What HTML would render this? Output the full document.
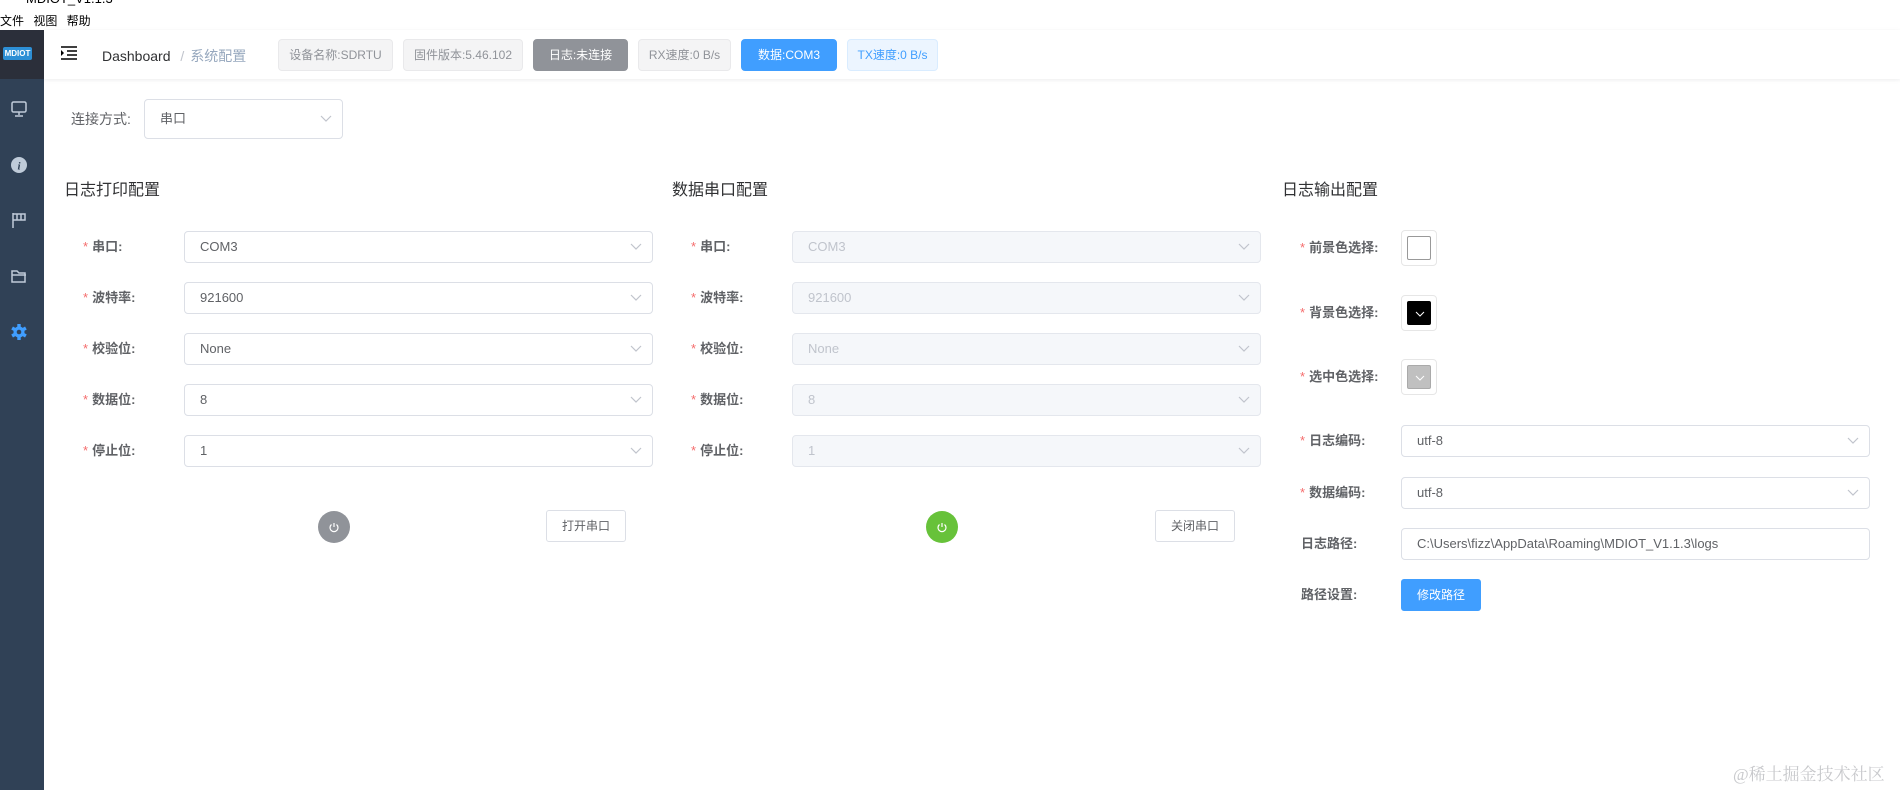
<!DOCTYPE html>
<html><head><meta charset="utf-8">
<style>
*{margin:0;padding:0;box-sizing:border-box}
body{width:1900px;height:790px;overflow:hidden;background:#fff;font-family:"Liberation Sans","Noto Sans CJK SC",sans-serif;color:#606266;position:relative}
.a{position:absolute}
.sb{left:0;top:30px;width:44px;height:760px;background:#304156}
.sbt{left:0;top:30px;width:44px;height:49px;background:#2b2f3a}
.logo{left:3px;top:47px;width:29px;height:13px;background:#2d8fd5;color:#fff;font-size:8px;font-weight:bold;line-height:13px;text-align:center;border-radius:2px}
.hdr{left:44px;top:30px;width:1856px;height:49px;background:#fff;box-shadow:0 1px 4px rgba(0,21,41,.08)}
.tag{top:39px;height:32px;line-height:30px;font-size:12px;border:1px solid #e9e9eb;background:#f4f4f5;color:#909399;border-radius:4px;text-align:center}
.lbl{font-size:13px;font-weight:bold;color:#606266;line-height:32px;text-align:left;white-space:nowrap}
.lbl i{color:#f56c6c;font-style:normal;font-weight:normal;margin-right:4px}
.sel{height:32px;border:1px solid #dcdfe6;border-radius:4px;background:#fff;font-size:13px;line-height:30px;padding-left:15px;color:#606266}
.sel.d{background:#f5f7fa;border-color:#e4e7ed;color:#c0c4cc}
.sel svg{position:absolute;right:10px;top:11px}
.ttl{font-size:16px;color:#303133}
.btn{height:32px;border:1px solid #dcdfe6;border-radius:3px;background:#fff;font-size:12px;line-height:30px;text-align:center;color:#606266}
.pw{width:32px;height:32px;border-radius:50%}
.cp{width:36px;height:36px;border:1px solid #e6e6e6;border-radius:4px;padding:5px}
.cp div{width:100%;height:100%;border:1px solid #999;border-radius:2px;position:relative}
</style></head><body>
<div class="a" style="left:26px;top:-9px;font-size:13px;color:#000">MDIOT_V1.1.3</div>
<div class="a" style="left:0;top:12px;font-size:12px;color:#000;word-spacing:6px">文件 视图 帮助</div>
<div class="a sb"></div><div class="a sbt"></div>
<div class="a logo">MDIOT</div>
<svg class="a" style="left:10px;top:100px" width="18" height="18" viewBox="0 0 18 18" fill="none" stroke="#bfcbd9" stroke-width="1.5"><rect x="2" y="2" width="14" height="10" rx="1.5"/><path d="M9 12v3M5 16h8"/></svg>
<svg class="a" style="left:10px;top:156px" width="18" height="18" viewBox="0 0 18 18"><circle cx="9" cy="9" r="8" fill="#bfcbd9"/><text x="9" y="13.5" font-size="11" font-style="italic" font-weight="bold" text-anchor="middle" fill="#304156" font-family="Liberation Serif">i</text></svg>
<svg class="a" style="left:10px;top:211px" width="18" height="18" viewBox="0 0 18 18" fill="none" stroke="#bfcbd9" stroke-width="1.5"><path d="M3 2v15M3 3h12v6H3M7 3v6M11 3v6"/></svg>
<svg class="a" style="left:10px;top:267px" width="18" height="18" viewBox="0 0 18 18" fill="none" stroke="#bfcbd9" stroke-width="1.5"><path d="M2 4h5l2 2h6v9H2zM2 8h14"/></svg>
<svg class="a" style="left:9px;top:322px" width="20" height="20" viewBox="0 0 20 20"><g stroke="#409eff" stroke-width="3.4" stroke-linecap="butt"><path d="M10 2v16M3.1 6l13.8 8M3.1 14l13.8-8"/></g><circle cx="10" cy="10" r="5.5" fill="#409eff"/><circle cx="10" cy="10" r="2.3" fill="#304156"/></svg>
<div class="a hdr"></div>
<svg class="a" style="left:61px;top:46px" width="16" height="14" viewBox="0 0 16 14" stroke="#000" stroke-width="1.6"><path d="M0 1h16M6 5h10M6 9h10M0 13h16"/><path d="M0 4l3 3-3 3z" fill="#000" stroke="none"/></svg>
<div class="a" style="left:102px;top:46px;font-size:14px;color:#303133">Dashboard <span style="color:#c0c4cc;margin:0 6px">/</span><span style="color:#97a8be">系统配置</span></div>
<div class="a tag" style="left:278px;width:115px">设备名称:SDRTU</div>
<div class="a tag" style="left:403px;width:120px">固件版本:5.46.102</div>
<div class="a tag" style="left:533px;width:95px;background:#909399;border-color:#909399;color:#fff">日志:未连接</div>
<div class="a tag" style="left:638px;width:93px">RX速度:0 B/s</div>
<div class="a tag" style="left:741px;width:96px;background:#409eff;border-color:#409eff;color:#fff">数据:COM3</div>
<div class="a tag" style="left:847px;width:91px;background:#ecf5ff;border-color:#d9ecff;color:#409eff">TX速度:0 B/s</div>

<div class="a lbl" style="left:71px;top:103px;font-weight:normal;font-size:14px">连接方式:</div>
<div class="a sel" style="left:144px;top:99px;width:199px;height:40px;line-height:38px">串口<svg width="12" height="8" viewBox="0 0 12 8" style="top:15px"><path d="M1 1l5 5 5-5" fill="none" stroke="#c0c4cc" stroke-width="1.2"/></svg></div>

<div class="a ttl" style="left:64px;top:176px">日志打印配置</div>
<div class="a ttl" style="left:672px;top:176px">数据串口配置</div>
<div class="a ttl" style="left:1282px;top:176px">日志输出配置</div>

<!-- col1 -->
<div class="a lbl" style="left:83px;top:231px"><i>*</i>串口:</div>
<div class="a sel" style="left:184px;top:231px;width:469px">COM3<svg width="12" height="8" viewBox="0 0 12 8"><path d="M1 1l5 5 5-5" fill="none" stroke="#c0c4cc" stroke-width="1.2"/></svg></div>
<div class="a lbl" style="left:83px;top:282px"><i>*</i>波特率:</div>
<div class="a sel" style="left:184px;top:282px;width:469px">921600<svg width="12" height="8" viewBox="0 0 12 8"><path d="M1 1l5 5 5-5" fill="none" stroke="#c0c4cc" stroke-width="1.2"/></svg></div>
<div class="a lbl" style="left:83px;top:333px"><i>*</i>校验位:</div>
<div class="a sel" style="left:184px;top:333px;width:469px">None<svg width="12" height="8" viewBox="0 0 12 8"><path d="M1 1l5 5 5-5" fill="none" stroke="#c0c4cc" stroke-width="1.2"/></svg></div>
<div class="a lbl" style="left:83px;top:384px"><i>*</i>数据位:</div>
<div class="a sel" style="left:184px;top:384px;width:469px">8<svg width="12" height="8" viewBox="0 0 12 8"><path d="M1 1l5 5 5-5" fill="none" stroke="#c0c4cc" stroke-width="1.2"/></svg></div>
<div class="a lbl" style="left:83px;top:435px"><i>*</i>停止位:</div>
<div class="a sel" style="left:184px;top:435px;width:469px">1<svg width="12" height="8" viewBox="0 0 12 8"><path d="M1 1l5 5 5-5" fill="none" stroke="#c0c4cc" stroke-width="1.2"/></svg></div>
<div class="a pw" style="left:318px;top:511px;background:#909399"><svg width="32" height="32" viewBox="0 0 32 32" fill="none" stroke="#fff" stroke-width="1.2"><path d="M13.5 13.5a4 4 0 1 0 5 0M16 12v4"/></svg></div>
<div class="a btn" style="left:546px;top:510px;width:80px">打开串口</div>

<!-- col2 -->
<div class="a lbl" style="left:691px;top:231px"><i>*</i>串口:</div>
<div class="a sel d" style="left:792px;top:231px;width:469px">COM3<svg width="12" height="8" viewBox="0 0 12 8"><path d="M1 1l5 5 5-5" fill="none" stroke="#c0c4cc" stroke-width="1.2"/></svg></div>
<div class="a lbl" style="left:691px;top:282px"><i>*</i>波特率:</div>
<div class="a sel d" style="left:792px;top:282px;width:469px">921600<svg width="12" height="8" viewBox="0 0 12 8"><path d="M1 1l5 5 5-5" fill="none" stroke="#c0c4cc" stroke-width="1.2"/></svg></div>
<div class="a lbl" style="left:691px;top:333px"><i>*</i>校验位:</div>
<div class="a sel d" style="left:792px;top:333px;width:469px">None<svg width="12" height="8" viewBox="0 0 12 8"><path d="M1 1l5 5 5-5" fill="none" stroke="#c0c4cc" stroke-width="1.2"/></svg></div>
<div class="a lbl" style="left:691px;top:384px"><i>*</i>数据位:</div>
<div class="a sel d" style="left:792px;top:384px;width:469px">8<svg width="12" height="8" viewBox="0 0 12 8"><path d="M1 1l5 5 5-5" fill="none" stroke="#c0c4cc" stroke-width="1.2"/></svg></div>
<div class="a lbl" style="left:691px;top:435px"><i>*</i>停止位:</div>
<div class="a sel d" style="left:792px;top:435px;width:469px">1<svg width="12" height="8" viewBox="0 0 12 8"><path d="M1 1l5 5 5-5" fill="none" stroke="#c0c4cc" stroke-width="1.2"/></svg></div>
<div class="a pw" style="left:926px;top:511px;background:#67c23a"><svg width="32" height="32" viewBox="0 0 32 32" fill="none" stroke="#fff" stroke-width="1.2"><path d="M13.5 13.5a4 4 0 1 0 5 0M16 12v4"/></svg></div>
<div class="a btn" style="left:1155px;top:510px;width:80px">关闭串口</div>

<!-- col3 -->
<div class="a lbl" style="left:1300px;top:232px"><i>*</i>前景色选择:</div>
<div class="a cp" style="left:1401px;top:230px"><div style="background:#fff"></div></div>
<div class="a lbl" style="left:1300px;top:297px"><i>*</i>背景色选择:</div>
<div class="a cp" style="left:1401px;top:295px"><div style="background:#000;border-color:#000"><svg class="a" style="left:7px;top:9px" width="10" height="6" viewBox="0 0 10 6"><path d="M1 1l4 4 4-4" fill="none" stroke="#fff" stroke-width="1"/></svg></div></div>
<div class="a lbl" style="left:1300px;top:361px"><i>*</i>选中色选择:</div>
<div class="a cp" style="left:1401px;top:359px"><div style="background:#c0c0c0;border-color:#aaa"><svg class="a" style="left:7px;top:9px" width="10" height="6" viewBox="0 0 10 6"><path d="M1 1l4 4 4-4" fill="none" stroke="#fff" stroke-width="1"/></svg></div></div>
<div class="a lbl" style="left:1300px;top:425px"><i>*</i>日志编码:</div>
<div class="a sel" style="left:1401px;top:425px;width:469px">utf-8<svg width="12" height="8" viewBox="0 0 12 8"><path d="M1 1l5 5 5-5" fill="none" stroke="#c0c4cc" stroke-width="1.2"/></svg></div>
<div class="a lbl" style="left:1300px;top:477px"><i>*</i>数据编码:</div>
<div class="a sel" style="left:1401px;top:477px;width:469px">utf-8<svg width="12" height="8" viewBox="0 0 12 8"><path d="M1 1l5 5 5-5" fill="none" stroke="#c0c4cc" stroke-width="1.2"/></svg></div>
<div class="a lbl" style="left:1301px;top:528px">日志路径:</div>
<div class="a sel" style="left:1401px;top:528px;width:469px">C:\Users\fizz\AppData\Roaming\MDIOT_V1.1.3\logs</div>
<div class="a lbl" style="left:1301px;top:579px">路径设置:</div>
<div class="a btn" style="left:1401px;top:579px;width:80px;background:#409eff;border-color:#409eff;color:#fff">修改路径</div>

<div class="a" style="left:1733px;top:760px;font-size:17px;color:#c8c9cc;font-family:'Liberation Serif','Noto Serif CJK SC',serif">@稀土掘金技术社区</div>
</body></html>
